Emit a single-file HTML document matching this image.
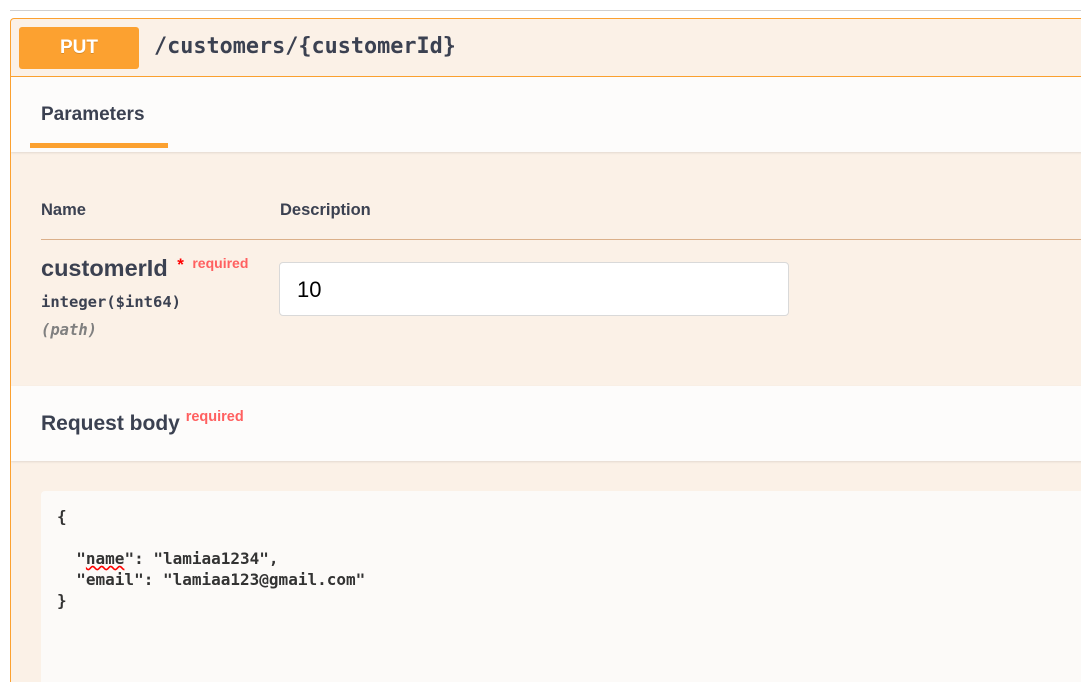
<!DOCTYPE html>
<html style="overflow:hidden"><head><style>
html,body{margin:0;width:1081px;height:682px;overflow:hidden}
body{background:#fff;font-family:"Liberation Sans",sans-serif;color:#3b4151;position:relative}
.top{position:absolute;left:10px;top:10px;width:1071px;height:1px;background:#d0d0d0}
.box{position:absolute;left:10px;top:18px;width:1080px;height:664px;border:1px solid #fca130;border-bottom:none;border-radius:4px 4px 0 0;background:#fbf1e7;overflow:hidden}
.hdr{height:57px;border-bottom:1px solid #fca130;position:relative}
.put{position:absolute;left:8px;top:8px;width:120px;height:42px;background:#fca130;border-radius:3px;color:#fff;font-weight:bold;font-size:19px;text-align:center;line-height:42px;text-shadow:0 1px 0 rgba(0,0,0,.15)}
.path{position:absolute;left:143px;top:15px;font-family:"DejaVu Sans Mono","Liberation Mono",monospace;font-weight:bold;font-size:21.8px;color:#3b4151}
.sec{background:#fdfcfb;box-shadow:0 1px 2px rgba(0,0,0,.1);position:relative}
</style></head><body>
<div class="top"></div>
<div class="box">
 <div class="hdr"><div class="put">PUT</div><div class="path">/customers/{customerId}</div></div>
 <div class="sec" style="height:75px">
  <div style="position:absolute;left:30px;top:27px;font-weight:bold;font-size:19px">Parameters</div>
  <div style="position:absolute;left:19px;top:66px;width:138px;height:5px;background:#fca130"></div>
 </div>
 <div style="height:234px;position:relative">
  <div style="position:absolute;left:30px;top:49px;font-weight:bold;font-size:16.5px">Name</div>
  <div style="position:absolute;left:269px;top:49px;font-weight:bold;font-size:16.5px">Description</div>
  <div style="position:absolute;left:30px;top:87px;width:1050px;height:1px;background:#dbb08a"></div>
  <div style="position:absolute;left:30px;top:103px;font-weight:bold;font-size:23.5px">customerId <span style="color:#f00;font-size:17px;position:relative;top:-6px;left:3px">*</span> <span style="color:#ff6060;font-size:14px;position:relative;top:-8px;left:5px">required</span></div>
  <div style="position:absolute;left:30px;top:141px;font-family:'DejaVu Sans Mono',monospace;font-weight:bold;font-size:15.5px">integer($int64)</div>
  <div style="position:absolute;left:30px;top:169px;font-family:'DejaVu Sans Mono',monospace;font-style:italic;font-weight:bold;font-size:15.5px;color:#808080">(path)</div>
  <div style="position:absolute;left:268px;top:110px;width:510px;height:54px;background:#fff;border:1px solid #d9d9d9;border-radius:4px;font-size:22px;line-height:54px;padding-left:17px;box-sizing:border-box;color:#000">10</div>
 </div>
 <div class="sec" style="height:75px">
  <div style="position:absolute;left:30px;top:26px;font-weight:bold;font-size:21px">Request body <span style="color:#ff6060;font-size:14.5px;position:relative;top:-9px">required</span></div>
 </div>
 <div style="position:relative;height:300px">
  <div style="position:absolute;left:30px;top:30px;width:1060px;height:300px;background:#fcfaf8;border-radius:4px">
   <pre style="margin:0;position:absolute;left:16px;top:15px;font-family:'DejaVu Sans Mono',monospace;font-weight:bold;font-size:16px;line-height:21px;color:#333">{

  "<span style="text-decoration:underline wavy red">name</span>": "lamiaa1234",
  "email": "lamiaa123@gmail.com"
}</pre>
  </div>
 </div>
</div>
</body></html>
